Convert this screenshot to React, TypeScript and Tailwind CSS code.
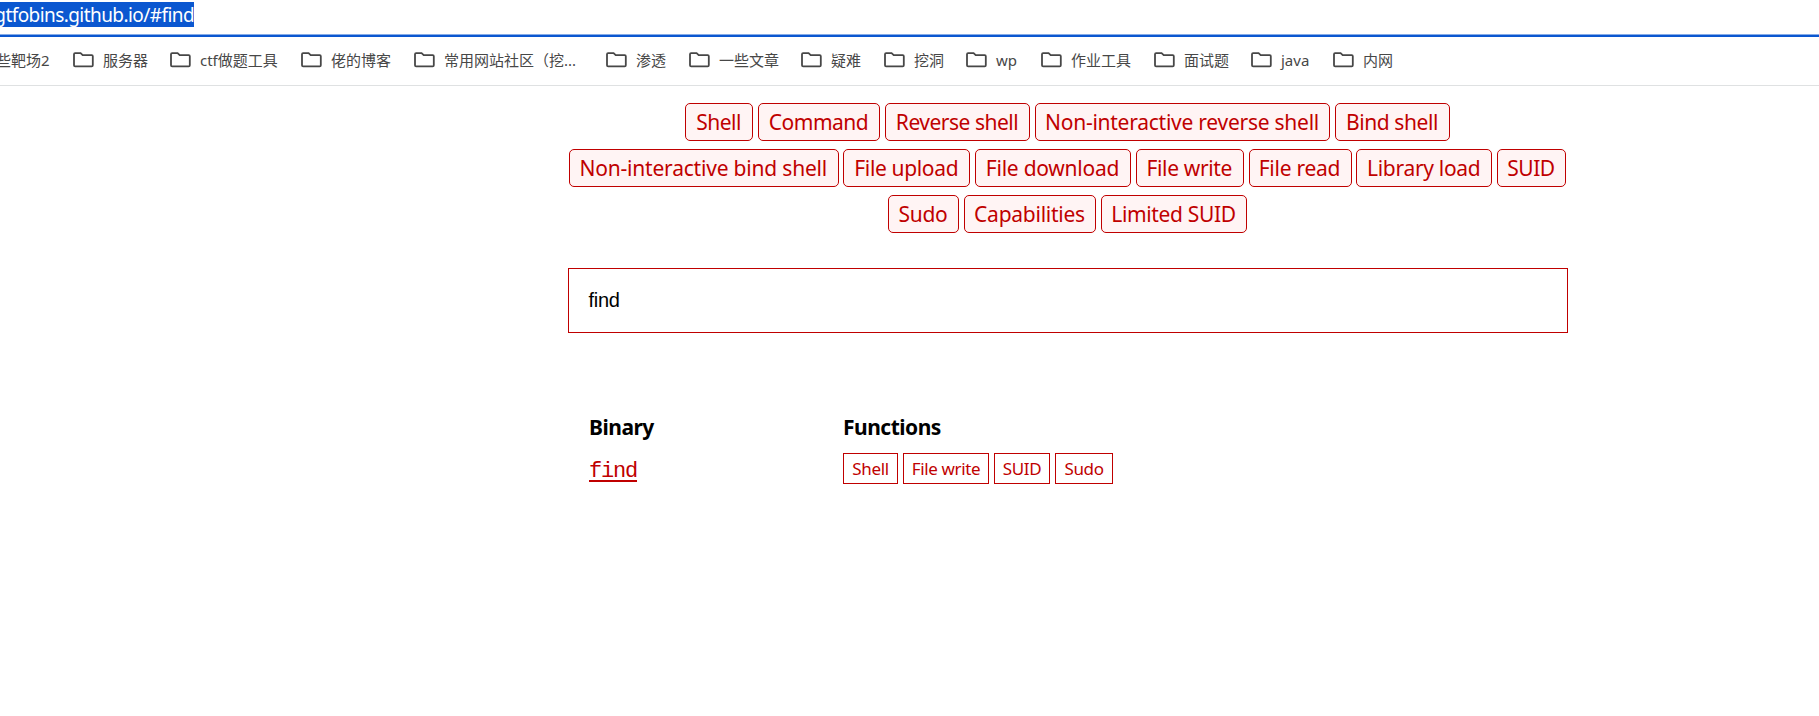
const bookmarks = [
  { name: "服务器", width: "w-[97px]" },
  { name: "ctf做题工具", width: "w-[131px]" },
  { name: "佬的博客", width: "w-[113px]" },
  { name: "常用网站社区（挖...", width: "w-[192px]" },
  { name: "渗透", width: "w-[83px]" },
  { name: "一些文章", width: "w-[112px]" },
  { name: "疑难", width: "w-[83px]" },
  { name: "挖洞", width: "w-[82px]" },
  { name: "wp", width: "w-[75px]" },
  { name: "作业工具", width: "w-[113px]" },
  { name: "面试题", width: "w-[97px]" },
  { name: "java", width: "w-[82px]" },
  { name: "内网", width: "w-[90px]" },
];

const filterRows = [
  {
    gap: "gap-[5px]",
    items: [
      { name: "Shell", style: "w-[68px] tracking-[-0.5px]" },
      { name: "Command", style: "w-[122px] tracking-[-0.5px]" },
      { name: "Reverse shell", style: "w-[145px] tracking-[-0.5px]" },
      { name: "Non-interactive reverse shell", style: "w-[295px] tracking-[-0.25px]" },
      { name: "Bind shell", style: "w-[115px] tracking-[-0.4px]" },
    ],
  },
  {
    gap: "gap-[4.75px]",
    items: [
      { name: "Non-interactive bind shell", style: "w-[269.5px] tracking-[-0.2px]" },
      { name: "File upload", style: "w-[127px] tracking-[-0.35px]" },
      { name: "File download", style: "w-[156px] tracking-[-0.25px]" },
      { name: "File write", style: "w-[108px] tracking-[-0.35px]" },
      { name: "File read", style: "w-[103px] tracking-[-0.25px]" },
      { name: "Library load", style: "w-[136px] tracking-[-0.3px]" },
      { name: "SUID", style: "w-[69px] tracking-[-0.5px]" },
    ],
  },
  {
    gap: "gap-[5px]",
    items: [
      { name: "Sudo", style: "w-[71px] tracking-[-0.3px]" },
      { name: "Capabilities", style: "w-[132px] tracking-[-0.25px]" },
      { name: "Limited SUID", style: "w-[146px] tracking-[-0.35px]" },
    ],
  },
];

const results = [
  { name: "Shell", style: "w-[55px]" },
  { name: "File write", style: "w-[86px]" },
  { name: "SUID", style: "w-[56px]" },
  { name: "Sudo", style: "w-[58px]" },
];

function Folder() {
  return (
    <svg className="h-4 w-[21px] shrink-0" viewBox="0 0 21 16" fill="none" stroke="#474747" strokeWidth="1.8">
      <path d="M1 2.3Q1 1.2 2.1 1.2H7.6L9.7 3.2H18.7Q19.8 3.2 19.8 4.3V13.3Q19.8 14.4 18.7 14.4H2.1Q1 14.4 1 13.3Z" />
    </svg>
  );
}

export default function App() {
  return (
    <div className="h-[716px] w-[1819px] overflow-hidden bg-white font-['Noto_Sans','Noto_Sans_CJK_SC',sans-serif]">
      <div className="flex h-[37px] flex-col justify-between pt-[2px]">
        <div className="flex h-[25px] w-[194px] items-center justify-end overflow-hidden whitespace-nowrap bg-[#0b57d0] pt-px text-[19px] tracking-[-0.57px] text-white">
          gtfobins.github.io/#find
        </div>
        <div className="h-[3px] border-t border-[#85abe8] bg-[#0b57d0]" />
      </div>
      <nav className="flex h-[49px] items-center border-b border-[#dfe1e2] pb-[7px] pt-1 text-[15px] text-[#474747]">
        <div className="flex w-[73px] shrink-0 pt-[2px]">
          <span className="-ml-[4px] whitespace-nowrap">些靶场2</span>
        </div>
        {bookmarks.map((b) => (
          <div key={b.name} className={`flex shrink-0 items-center gap-[9px] whitespace-nowrap ${b.width}`}>
            <Folder />
            <span className="pt-[2px]">{b.name}</span>
          </div>
        ))}
      </nav>
      <main className="ml-[568px] w-[1000px] pt-[17px]">
        <div className="flex flex-col gap-2">
          {filterRows.map((row, i) => (
            <div key={i} className={`flex justify-center pr-px ${row.gap}`}>
              {row.items.map((f) => (
                <button
                  key={f.name}
                  className={`flex h-[38px] shrink-0 items-center justify-center whitespace-nowrap rounded-[5px] border border-[#c00000] bg-[#fff4f4] pr-px pt-[2px] text-[21px] text-[#c00000] ${f.style}`}
                >
                  {f.name}
                </button>
              ))}
            </div>
          ))}
        </div>
        <div className="mt-[35px] flex h-[65px] items-center border border-[#c00000] pb-[2px] pl-[19.5px] font-['Liberation_Sans',sans-serif] text-[20px] tracking-[-0.3px] text-black">
          find
        </div>
        <div className="mt-[78px] grid grid-cols-[254px_1fr] pl-[21px]">
          <div className="h-8 text-[21px] font-bold leading-8 tracking-[-0.5px] text-black">Binary</div>
          <div className="h-8 text-[21px] font-bold leading-8 tracking-[-0.5px] text-black">Functions</div>
          <div className="pt-[13px]">
            <a className="font-['Liberation_Mono',monospace] text-[22px] leading-8 tracking-[-1.2px] text-[#c00000] underline decoration-2 underline-offset-[3px]">find</a>
          </div>
          <div className="mt-[10px] flex gap-[5px]">
            {results.map((r) => (
              <span
                key={r.name}
                className={`flex h-[31px] items-center justify-center whitespace-nowrap border border-[#c00000] text-[17px] tracking-[-0.35px] text-[#c00000] ${r.style}`}
              >
                {r.name}
              </span>
            ))}
          </div>
        </div>
      </main>
    </div>
  );
}
